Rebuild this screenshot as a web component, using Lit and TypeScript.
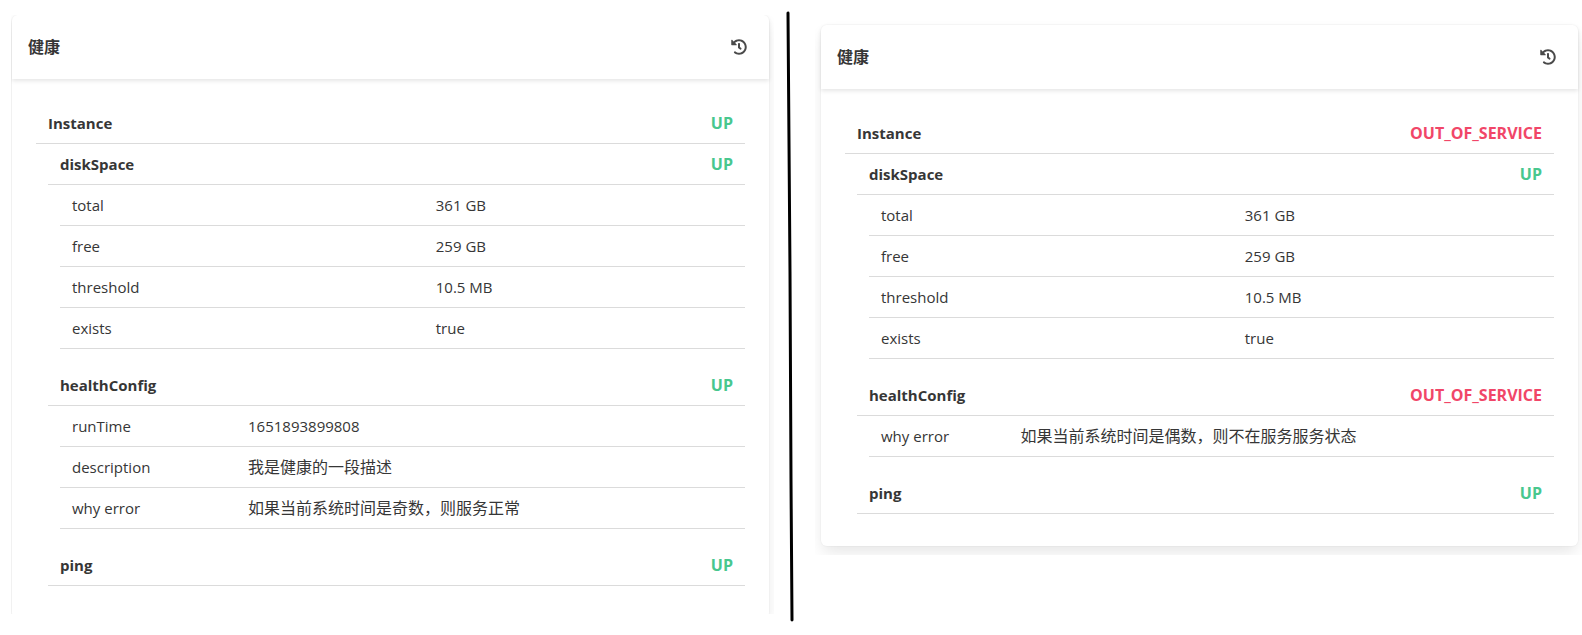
import { LitElement, html, css } from "lit";
import { customElement, property } from "lit/decorators.js";
import { classMap } from "lit/directives/class-map.js";

interface Health {
  name: string;
  status: string;
  details?: [string, string][];
  children?: Health[];
}

const diskSpace: Health = {
  name: "diskSpace",
  status: "UP",
  details: [
    ["total", "361 GB"],
    ["free", "259 GB"],
    ["threshold", "10.5 MB"],
    ["exists", "true"],
  ],
};

const healthy: Health = {
  name: "Instance",
  status: "UP",
  children: [
    diskSpace,
    {
      name: "healthConfig",
      status: "UP",
      details: [
        ["runTime", "1651893899808"],
        ["description", "我是健康的一段描述"],
        ["why error", "如果当前系统时间是奇数，则服务正常"],
      ],
    },
    { name: "ping", status: "UP" },
  ],
};

const failing: Health = {
  name: "Instance",
  status: "OUT_OF_SERVICE",
  children: [
    diskSpace,
    {
      name: "healthConfig",
      status: "OUT_OF_SERVICE",
      details: [["why error", "如果当前系统时间是偶数，则不在服务服务状态"]],
    },
    { name: "ping", status: "UP" },
  ],
};

const hasHan = (text: string) => /[\u4e00-\u9fff]/.test(text);

@customElement("health-details")
export class HealthDetails extends LitElement {
  @property({ attribute: false }) health!: Health;

  static styles = css`
    :host {
      display: block;
    }
    .head {
      display: flex;
      justify-content: space-between;
      align-items: center;
      height: 40px;
      padding: 0 12px;
      border-bottom: 1px solid #dbdbdb;
      color: #363636;
      font-weight: 700;
    }
    .status {
      font-size: 16px;
      color: #f14668;
    }
    .up {
      color: #48c78e;
    }
    .child {
      margin-left: 12px;
    }
    .details {
      width: calc(100% - 12px);
      margin: 0 0 16px 12px;
      border-collapse: separate;
      border-spacing: 0;
    }
    .key,
    .value {
      height: 40px;
      padding: 0 12px;
      border-bottom: 1px solid #dbdbdb;
      text-align: left;
      font-weight: 400;
      color: #363636;
    }
    .han {
      font-size: 16px;
    }
  `;

  render() {
    const { name, status, details, children } = this.health;
    return html`
      <div class="head">
        <span>${name}</span>
        <span class=${classMap({ status: true, up: status === "UP" })}>${status}</span>
      </div>
      ${details
        ? html`<table class="details">
            <tbody>
              ${details.map(
                ([key, value]) => html`<tr>
                  <th class="key" scope="row">${key}</th>
                  <td class=${classMap({ value: true, han: hasHan(value) })}>${value}</td>
                </tr>`
              )}
            </tbody>
          </table>`
        : null}
      ${children?.map(
        (child) => html`<health-details class="child" .health=${child}></health-details>`
      )}
    `;
  }
}

@customElement("health-card")
export class HealthCard extends LitElement {
  @property({ attribute: false }) health!: Health;

  static styles = css`
    :host {
      display: block;
      border-radius: 6px;
      background: #fff;
      box-shadow:
        0 8px 16px -2px rgba(10, 10, 10, 0.1),
        0 0 0 1px rgba(10, 10, 10, 0.02);
    }
    .header {
      display: flex;
      align-items: center;
      justify-content: space-between;
      height: 64px;
      padding: 0 16px;
      border-radius: 6px 6px 0 0;
      box-shadow: 0 2px 4px rgba(10, 10, 10, 0.1);
    }
    .title {
      margin: 0;
      font-size: 16px;
      font-weight: 700;
      color: #363636;
    }
    .history {
      display: flex;
      padding: 6px;
      border: 0;
      background: none;
      color: #4a4a4a;
      cursor: pointer;
    }
    .body {
      padding: 24px 24px 32px;
    }
  `;

  render() {
    return html`
      <header class="header">
        <h2 class="title">健康</h2>
        <button class="history" type="button" aria-label="历史">
          <svg width="16" height="16" viewBox="0 0 512 512" fill="currentColor" aria-hidden="true">
            <path
              d="M504 255.531c.253 136.64-111.18 248.372-247.82 248.468-59.015.042-113.223-20.53-155.822-54.911-11.077-8.94-11.905-25.541-1.839-35.607l11.267-11.267c8.609-8.609 22.353-9.551 31.891-1.984C173.062 425.135 212.781 440 256 440c101.705 0 184-82.311 184-184 0-101.705-82.311-184-184-184-48.814 0-93.149 18.969-126.068 49.932l50.754 50.754c10.08 10.08 2.941 27.314-11.313 27.314H24c-8.837 0-16-7.163-16-16V38.627c0-14.254 17.234-21.393 27.314-11.314l49.372 49.372C129.209 34.136 189.552 8 256 8c136.81 0 247.747 110.78 248 247.531zm-180.912 78.784l9.823-12.63c8.138-10.463 6.253-25.542-4.21-33.679L288 256.349V152c0-13.255-10.745-24-24-24h-16c-13.255 0-24 10.745-24 24v135.651l65.409 50.874c10.463 8.137 25.541 6.253 33.679-4.21z"
            />
          </svg>
        </button>
      </header>
      <div class="body"><health-details .health=${this.health}></health-details></div>
    `;
  }
}

@customElement("app-root")
export class AppRoot extends LitElement {
  static styles = css`
    :host {
      display: grid;
      grid-template-columns: 1fr 52px 1fr;
      align-items: start;
      padding: 0 4px 0 12px;
      background: #fff;
      font: 15px/24px "Open Sans", "Noto Sans CJK SC", sans-serif;
    }
    .left {
      margin-top: 15px;
      clip-path: inset(0 -5px 4px -1px);
    }
    .right {
      margin-top: 25px;
      clip-path: inset(-6px -4px -9px -6px);
    }
    .divider {
      display: block;
      margin-top: 10px;
    }
  `;

  render() {
    return html`
      <health-card class="left" .health=${healthy}></health-card>
      <svg class="divider" width="52" height="613" viewBox="0 0 52 613" aria-hidden="true">
        <path
          d="M19 3 L21 262 L22 470 L23 610"
          fill="none"
          stroke="#000"
          stroke-width="3"
          stroke-linecap="round"
        />
      </svg>
      <health-card class="right" .health=${failing}></health-card>
    `;
  }
}
